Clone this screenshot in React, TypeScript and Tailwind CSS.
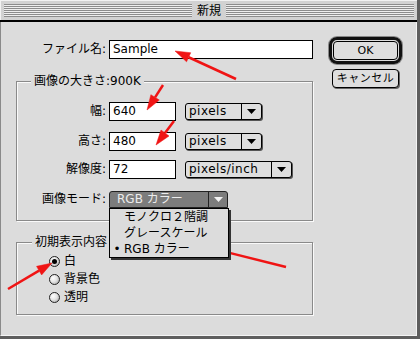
const stripes =
  "bg-[repeating-linear-gradient(to_bottom,#8c8c8c_0px,#8c8c8c_1px,#eeeeee_1px,#eeeeee_2px)]";

function DownArrow({ white }: { white?: boolean }) {
  return (
    <svg width="9" height="5" viewBox="0 0 9 5">
      <polygon points="0,0 9,0 4.5,5" fill={white ? "#f2f2f2" : "#000"} />
    </svg>
  );
}

function Popup({ label, width }: { label: string; width: string }) {
  return (
    <div
      className={`ml-[9px] ${width} h-[17px] flex border border-black rounded-[3px] bg-[#dedede] shadow-[1px_1px_0_#555]`}
    >
      <span className="flex-1 pl-[3px] leading-[15px] tracking-[0.5px]">{label}</span>
      <div className="w-[20px] border-l border-black flex items-center justify-center">
        <DownArrow />
      </div>
    </div>
  );
}

function Field({ value, width }: { value: string; width: string }) {
  return (
    <div className={`${width} h-[19px] border border-black bg-white pl-[3px] leading-[17px]`}>
      {value}
    </div>
  );
}

function Row({ label, children, className }: { label: string; children: React.ReactNode; className?: string }) {
  return (
    <div className={`flex items-center h-[19px] ${className ?? ""}`}>
      <span className="w-[92px] text-right pr-[3px] leading-[19px]">{label}</span>
      {children}
    </div>
  );
}

function Radio({ checked, label }: { checked?: boolean; label: string }) {
  return (
    <div className="flex items-center h-[18px] pl-[32px]">
      <div className="w-[11px] h-[11px] rounded-full border border-[#222] bg-[radial-gradient(circle_at_35%_35%,#ffffff_0%,#e4e4e4_45%,#9a9a9a_100%)] flex items-center justify-center">
        {checked && <div className="w-[5px] h-[5px] rounded-full bg-black" />}
      </div>
      <span className="ml-[4px] leading-[18px]">{label}</span>
    </div>
  );
}

const arrows: [number, number, number, number][] = [
  [236, 79, 175, 51],
  [163, 85, 147, 110],
  [174, 121, 156, 145],
  [286, 267, 214, 249],
  [8, 289, 52, 263],
];

function Arrows() {
  return (
    <svg className="absolute inset-0 pointer-events-none" width="420" height="339">
      {arrows.map(([x1, y1, x2, y2], i) => {
        const dx = x2 - x1;
        const dy = y2 - y1;
        const len = Math.hypot(dx, dy);
        const ux = dx / len;
        const uy = dy / len;
        const bx = x2 - ux * 15;
        const by = y2 - uy * 15;
        const px = -uy * 5;
        const py = ux * 5;
        return (
          <g key={i} fill="#f01414" stroke="#f01414">
            <line x1={x1} y1={y1} x2={bx} y2={by} strokeWidth="2.5" />
            <polygon
              points={`${x2},${y2} ${bx + px},${by + py} ${bx - px},${by - py}`}
              strokeWidth="0.5"
            />
          </g>
        );
      })}
    </svg>
  );
}

export default function App() {
  return (
    <div className="relative w-[420px] h-[339px] flex flex-col bg-[#dcdcdc] border-r-[3px] border-b-[3px] border-[#5e5e5e] text-[12px] text-black font-['DejaVu_Sans','Noto_Sans_CJK_JP',sans-serif]">
      {/* title bar */}
      <div className="h-[20px] flex items-center px-[3px] bg-[#d2d2d2] border-t border-l border-[#f2f2f2]">
        <div className={`flex-1 h-[13px] ${stripes}`} />
        <span className="px-[5px] leading-[14px]">新規</span>
        <div className={`flex-1 h-[13px] ${stripes}`} />
      </div>
      <div className="h-[2px] bg-black" />

      {/* body */}
      <div className="flex-1 flex border-l border-[#8a8a8a] border-r border-b border-r-[#f4f4f4] border-b-[#f4f4f4] pl-[15px] pt-[18px]">
        <div className="w-[297px] flex flex-col">
          <div className="flex items-center h-[19px]">
            <span className="w-[93px] text-right pr-[3px] leading-[19px]">ファイル名:</span>
            <Field value="Sample" width="w-[204px]" />
          </div>

          {/* image size group */}
          <div className="relative mt-[22px] h-[140px] border border-[#8a8a8a] shadow-[inset_1px_1px_0_#fafafa,1px_1px_0_#fafafa] pt-[20px]">
            <span className="absolute -top-[9px] left-[14px] px-[3px] bg-[#dcdcdc] leading-[16px]">
              画像の大きさ:900K
            </span>
            <Row label="幅:">
              <Field value="640" width="w-[67px]" />
              <Popup label="pixels" width="w-[77px]" />
            </Row>
            <Row label="高さ:" className="mt-[11px]">
              <Field value="480" width="w-[67px]" />
              <Popup label="pixels" width="w-[77px]" />
            </Row>
            <Row label="解像度:" className="mt-[9px]">
              <Field value="72" width="w-[67px]" />
              <Popup label="pixels/inch" width="w-[107px]" />
            </Row>
            <Row label="画像モード:" className="mt-[11px]">
              <div className="relative z-10 w-[119px] h-[17px] flex border border-[#222] rounded-t-[3px] bg-[#7c7c7c] text-[#ececec]">
                <span className="flex-1 pl-[7px] leading-[15px]">RGB カラー</span>
                <div className="w-[19px] border-l border-[#222] flex items-center justify-center">
                  <DownArrow white />
                </div>
                {/* open menu */}
                <div className="absolute top-[16px] -left-[1px] w-[120px] border border-black bg-[#dcdcdc] text-black shadow-[2px_2px_0_#333]">
                  <div className="h-[16px] pl-[14px] leading-[16px]">モノクロ２階調</div>
                  <div className="h-[16px] pl-[14px] leading-[16px]">グレースケール</div>
                  <div className="h-[16px] flex leading-[16px]">
                    <span className="w-[14px] text-center">•</span>
                    <span>RGB カラー</span>
                  </div>
                </div>
              </div>
            </Row>
          </div>

          {/* initial contents group */}
          <div className="relative mt-[21px] h-[73px] border border-[#8a8a8a] shadow-[inset_1px_1px_0_#fafafa,1px_1px_0_#fafafa] pt-[9px]">
            <span className="absolute -top-[9px] left-[15px] px-[3px] bg-[#dcdcdc] leading-[16px]">
              初期表示内容
            </span>
            <Radio checked label="白" />
            <Radio label="背景色" />
            <Radio label="透明" />
          </div>
        </div>

        {/* buttons */}
        <div className="ml-[16px] w-[73px] flex flex-col -mt-[3px]">
          <div className="h-[27px] border-[3px] border-[#111] rounded-[8px] p-[1px] shadow-[0_0_0_1px_#888]">
            <div className="h-full border border-black rounded-[4px] bg-[#dedede] flex items-center justify-center text-[11px] leading-none">
              OK
            </div>
          </div>
          <div className="mt-[5px] mx-[3px] h-[19px] border border-black rounded-[4px] bg-[#dedede] shadow-[1px_1px_0_#666] flex items-center justify-center text-[11px] leading-none tracking-[0.5px]">
            キャンセル
          </div>
        </div>
      </div>

      <Arrows />
    </div>
  );
}
